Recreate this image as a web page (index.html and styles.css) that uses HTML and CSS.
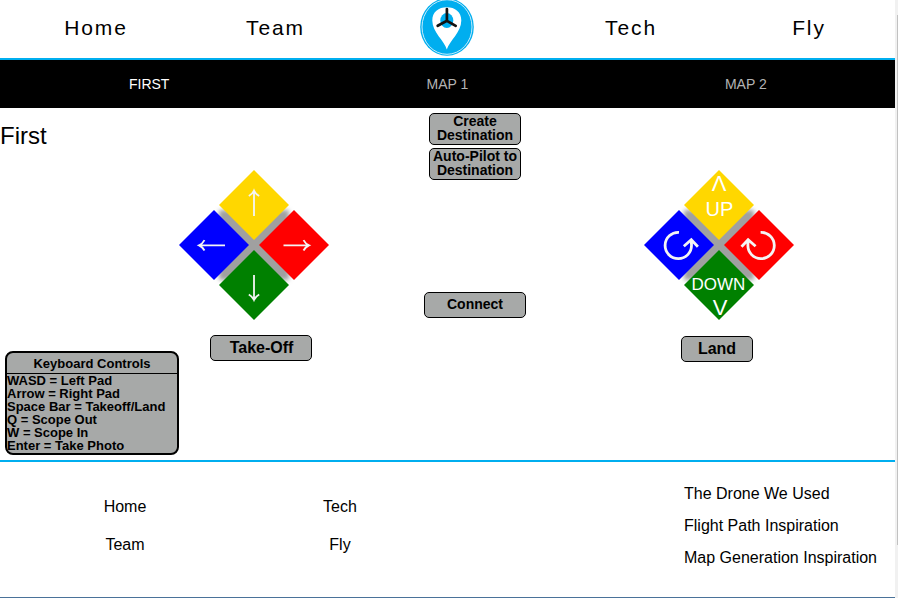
FILE: index.html
```html
<!DOCTYPE html>
<html lang="en">
<head>
<meta charset="utf-8">
<title>Drone Control</title>
<link rel="stylesheet" href="styles.css">
</head>
<body>
<div class="page">
  <header class="nav">
    <a>Home</a>
    <a>Team</a>
    <svg class="logo" width="56" height="58" viewBox="0 0 56 58">
      <ellipse cx="28" cy="27" rx="26.800" ry="28.800" fill="#00aeef"/>
      <ellipse cx="28" cy="27" rx="25" ry="27.300" fill="none" stroke="#c9edfb" stroke-width="1"/>
      <path d="M27.800 49.500C25.500 41 13.300 32 13.300 20.500C13.300 12 19.500 7.300 27.800 7.300S42.300 12 42.300 20.500C42.300 32 30.500 41 27.800 49.500Z" fill="#fff"/>
      <ellipse cx="27.800" cy="20.500" rx="6.500" ry="7.500" fill="#00aeef"/>
      <path d="M27.900 9V21M18.700 25.800L27.900 20.800L36.700 25.800" fill="none" stroke="#111" stroke-width="2.700" stroke-linecap="round"/>
    </svg>
    <a>Tech</a>
    <a>Fly</a>
  </header>
  <nav class="tabs">
    <a class="active">FIRST</a>
    <a>MAP 1</a>
    <a>MAP 2</a>
  </nav>
  <main class="controls">
    <section class="left">
      <h1>First</h1>
      <svg class="pad" width="150" height="150" viewBox="0 0 150 150">
        <rect class="shade" x="40" y="40" width="70" height="70"/>
        <path fill="gold" d="M75 0L110 35L75 70L40 35Z"/>
        <path fill="blue" d="M35 40L70 75L35 110L0 75Z"/>
        <path fill="red" d="M115 40L150 75L115 110L80 75Z"/>
        <path fill="green" d="M75 80L110 115L75 150L40 115Z"/>
        <g class="arrow">
          <path d="M75 46V20.500M69.800 26Q73.500 24 75 20.500Q76.500 24 80.200 26"/>
          <path d="M75 105V130M69.800 124.500Q73.500 126.500 75 130Q76.500 126.500 80.200 124.500"/>
          <path d="M46 75.300H20M25.500 70.100Q23.500 73.800 20 75.300Q23.500 76.800 25.500 80.500"/>
          <path d="M104.500 75.300H130M124.500 70.100Q126.500 73.800 130 75.300Q126.500 76.800 124.500 80.500"/>
        </g>
      </svg>
      <button class="btn takeoff">Take-Off</button>
      <div class="keys">
        <h2>Keyboard Controls</h2>
        <p>WASD = Left Pad</p>
        <p>Arrow = Right Pad</p>
        <p>Space Bar = Takeoff/Land</p>
        <p>Q = Scope Out</p>
        <p>W = Scope In</p>
        <p>Enter = Take Photo</p>
      </div>
    </section>
    <section class="center">
      <button class="btn dest">Create Destination</button>
      <button class="btn dest">Auto-Pilot to Destination</button>
      <button class="btn connect">Connect</button>
    </section>
    <section class="right">
      <svg class="pad" width="150" height="150" viewBox="0 0 150 150">
        <rect class="shade" x="40" y="40" width="70" height="70"/>
        <path fill="gold" d="M75 0L110 35L75 70L40 35Z"/>
        <path fill="blue" d="M35 40L70 75L35 110L0 75Z"/>
        <path fill="red" d="M115 40L150 75L115 110L80 75Z"/>
        <path fill="green" d="M75 80L110 115L75 150L40 115Z"/>
        <g class="label">
          <text x="75" y="21" font-size="22">Λ</text>
          <text x="75.500" y="46" font-size="20">UP</text>
          <text x="74.500" y="119.500" font-size="17">DOWN</text>
          <text x="76" y="145" font-size="22">V</text>
        </g>
        <g class="turn">
          <path d="M35 62.300A13.200 13.200 0 1 0 47.500 75L47.300 70M39.800 76.200L47.300 69.700L53.900 76.700"/>
          <path d="M116.600 62.300A13.200 13.200 0 1 1 103.900 75L104.100 70M111.600 76.200L104.100 69.700L97.500 76.700"/>
        </g>
      </svg>
      <button class="btn land">Land</button>
    </section>
  </main>
  <footer class="footer">
    <div class="links"><a>Home</a><a>Team</a></div>
    <div class="links second"><a>Tech</a><a>Fly</a></div>
    <div class="credits"><a>The Drone We Used</a><a>Flight Path Inspiration</a><a>Map Generation Inspiration</a></div>
  </footer>
</div>
<div class="scroll"><div class="thumb"></div></div>
</body>
</html>
```
FILE: styles.css
```css
* { box-sizing: border-box; }
body {
  margin: 0;
  height: 599px;
  display: flex;
  overflow: hidden;
  background: #fff;
  color: #000;
  font-family: "Liberation Sans", Arial, sans-serif;
}
.page { width: 895px; height: 598px; border-bottom: 1px solid #4a7299; }
.scroll { width: 3px; height: 598px; padding: 15px 0 0 1px; background: #f1f1f1; }
.thumb { height: 530px; margin-left: 1px; background: #c1c1c1; }

.nav {
  height: 60px;
  display: grid;
  grid-template-columns: 192px 167px 176px 192px 164px;
  justify-items: center;
  align-items: center;
  border-bottom: 2px solid #00aeef;
  font-size: 21px;
  letter-spacing: 1.9px;
}
.nav a { padding-bottom: 3px; }
.logo { display: block; }

.tabs {
  height: 48px;
  display: grid;
  grid-template-columns: repeat(3, 1fr);
  place-items: center;
  background: #000;
  color: #b3b3b3;
  font-size: 14px;
}
.tabs .active { color: #fff; }

.controls {
  height: 354px;
  display: grid;
  grid-template-columns: 400px 150px 345px;
  border-bottom: 2px solid #00aeef;
}
h1 { margin: 0; padding-top: 14px; height: 62px; font-size: 24px; font-weight: 400; line-height: 28px; }
.pad { display: block; overflow: visible; }
.shade { fill: #a0a0a0; filter: blur(2px); }
.arrow { fill: none; stroke: #f4f4f4; stroke-width: 1.8; }
.turn { fill: none; stroke: #f4f4f4; stroke-width: 2.8; }
.label { fill: #fff; text-anchor: middle; }
.left .pad { margin-left: 179px; }
.btn {
  display: block;
  padding: 0;
  border: 1px solid #000;
  border-radius: 5px;
  background: #a7a9a8;
  color: #000;
  font: bold 16px/18px "Liberation Sans", Arial, sans-serif;
}
.takeoff { width: 102px; height: 26px; margin: 15px 0 0 210px; padding-left: 1px; }
.keys {
  width: 174px;
  height: 104px;
  margin: -10px 0 0 5px;
  border: 2px solid #000;
  border-radius: 8px;
  background: #a7a9a8;
  font-size: 13px;
  font-weight: 700;
  line-height: 13px;
}
.keys h2 {
  margin: 0;
  height: 21px;
  border-bottom: 1px solid #000;
  font-size: 13px;
  line-height: 21px;
  text-align: center;
}
.keys p { margin: 0; white-space: nowrap; }
.center { display: flex; flex-direction: column; align-items: center; padding-top: 5px; }
.dest { width: 92px; height: 32px; margin-bottom: 3px; padding-bottom: 2px; font-size: 14px; line-height: 14px; }
.connect { width: 102px; height: 26px; margin-top: 109px; padding-bottom: 2px; font-size: 14px; }
.right { padding: 62px 0 0 94px; }
.land { width: 72px; height: 26px; margin: 16px 0 0 37px; }

.footer { height: 135px; display: grid; grid-template-columns: 250px 180px 465px; font-size: 16px; }
.links { display: flex; flex-direction: column; align-items: center; gap: 20px; padding-top: 36px; line-height: 18px; }
.credits { display: flex; flex-direction: column; gap: 14px; padding: 23px 0 0 254px; line-height: 18px; white-space: nowrap; }
```
